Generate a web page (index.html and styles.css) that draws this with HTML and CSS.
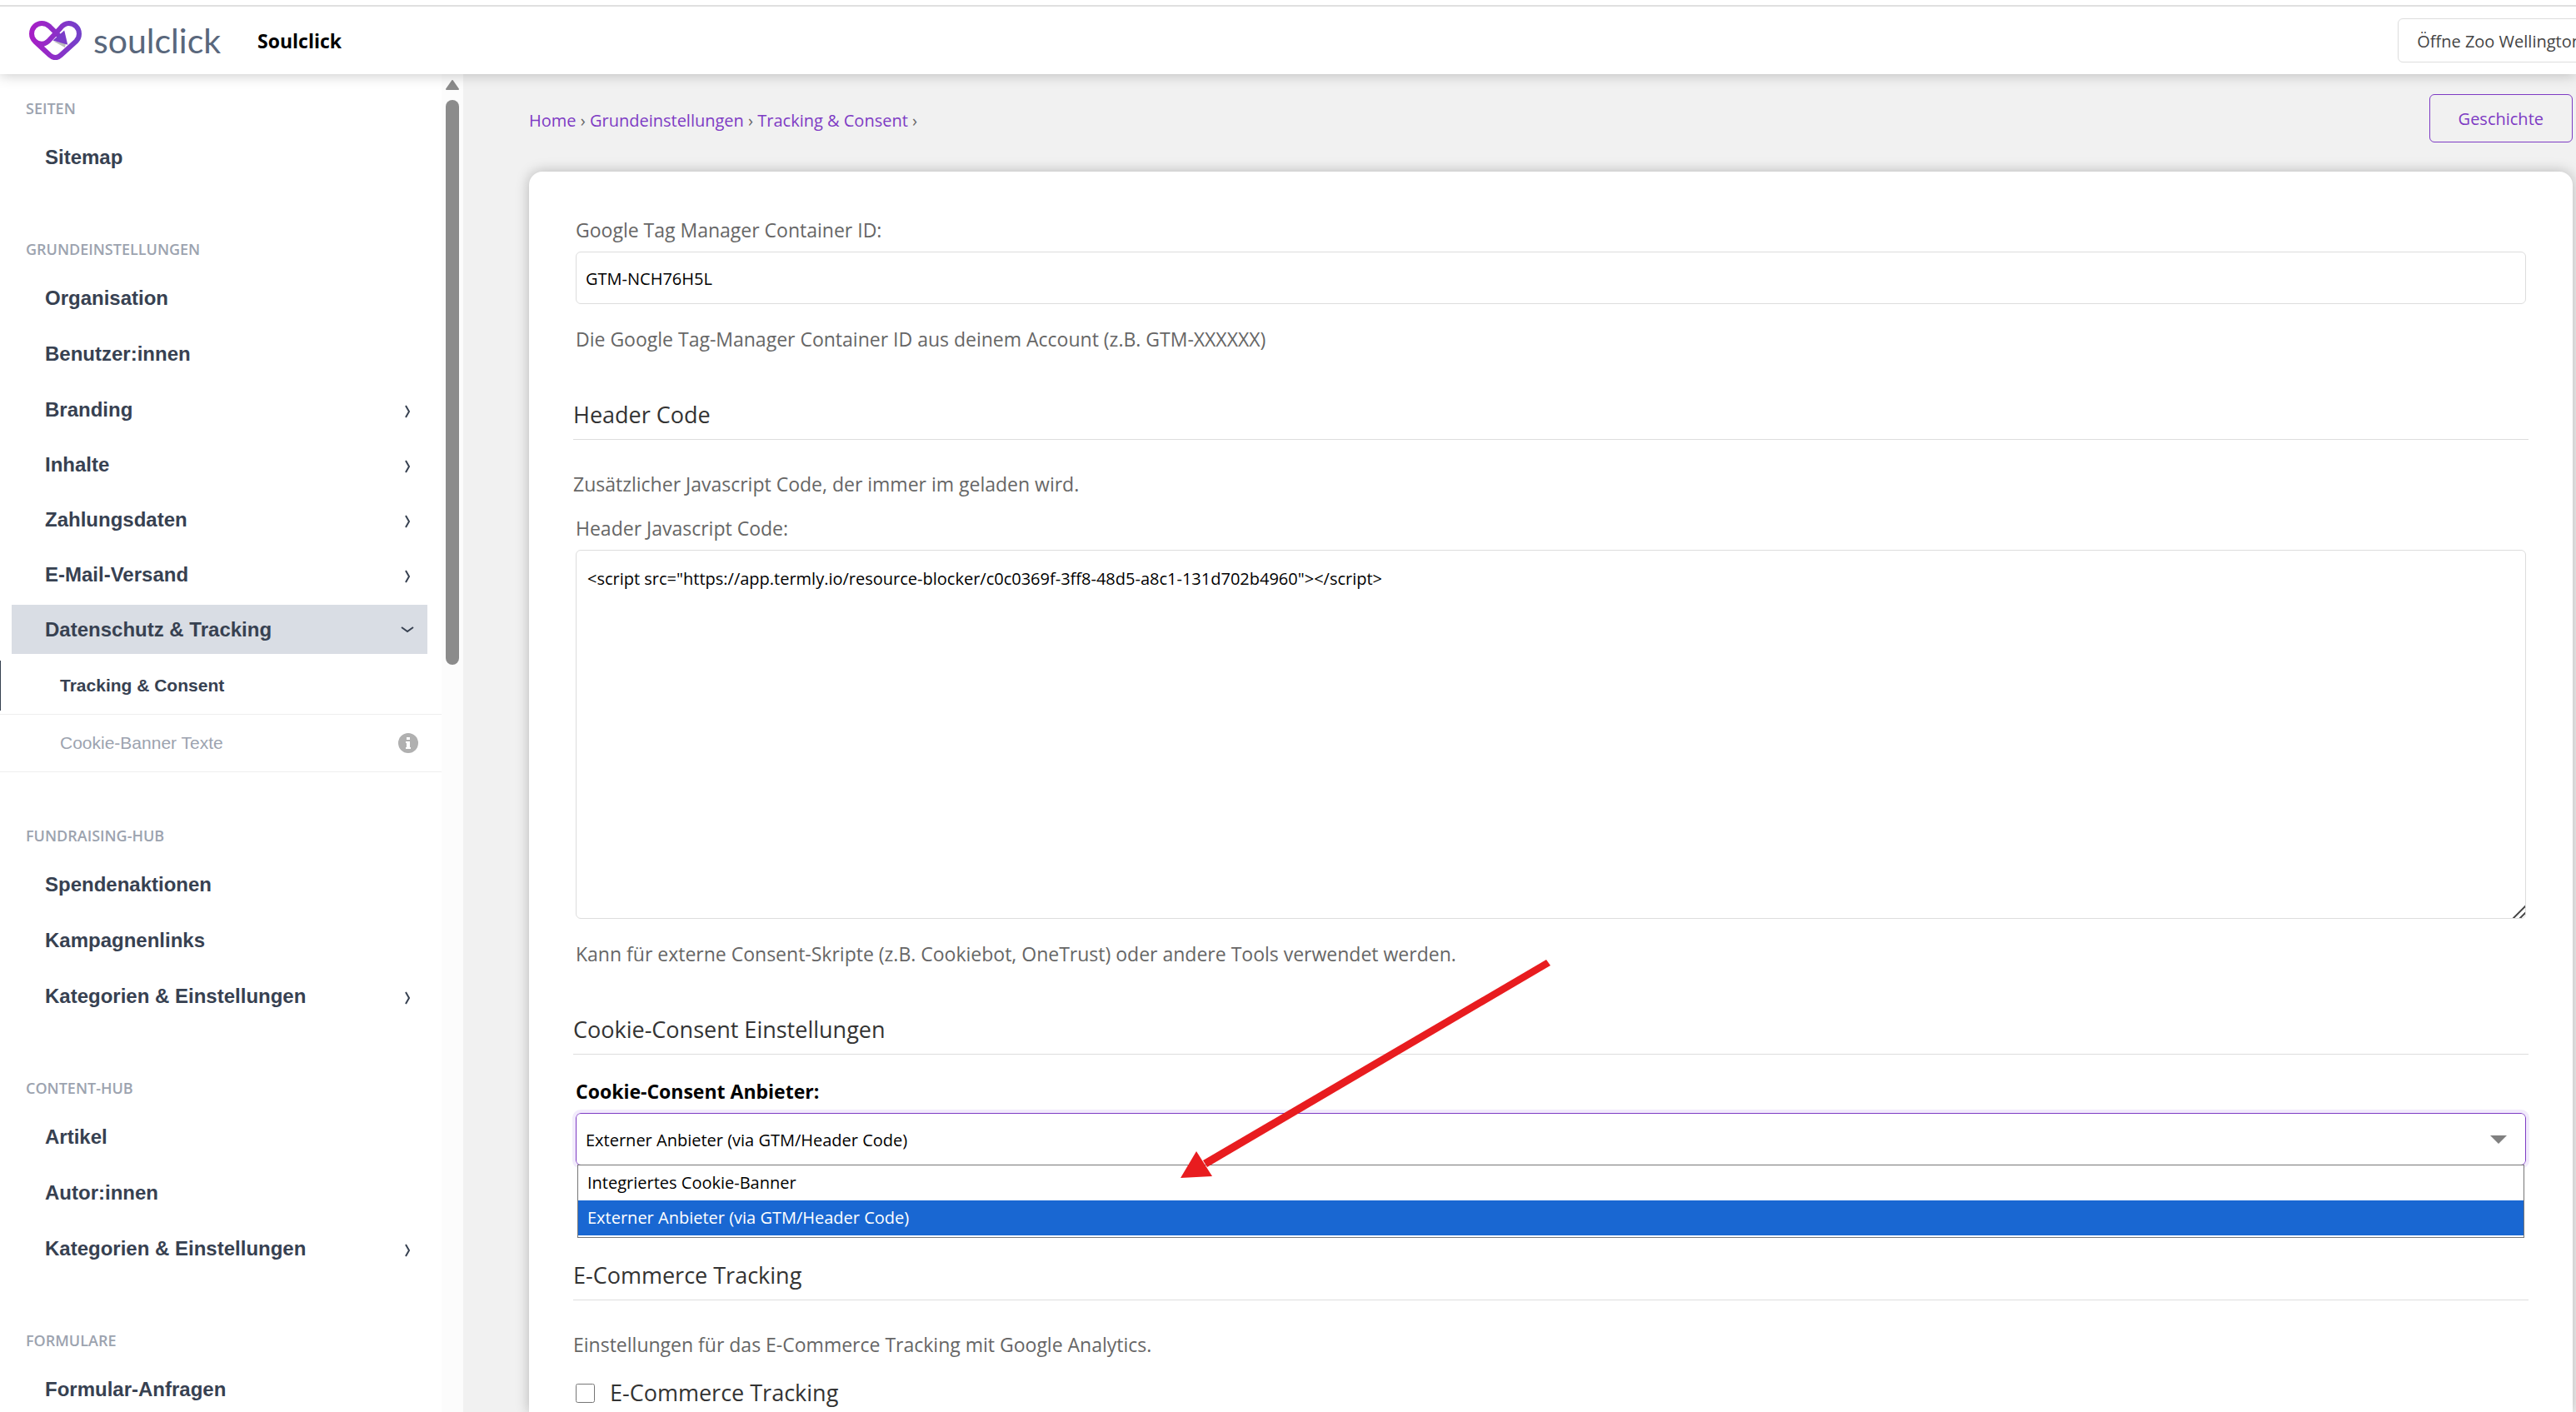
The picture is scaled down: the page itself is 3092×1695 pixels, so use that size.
FILE: index.html
```html
<!DOCTYPE html>
<html lang="de">
<head>
<meta charset="utf-8">
<title>Tracking &amp; Consent | Soulclick</title>
<link rel="stylesheet" href="styles.css">
</head>
<body>
<header class="header">
    <a class="logo" href="#">
        <svg class="logo-icon" viewBox="0 0 188 140" aria-hidden="true">
            <defs>
                <linearGradient id="heart" x1="0" y1="0" x2="1" y2="0">
                    <stop offset="0" stop-color="#a61fc6"/>
                    <stop offset="1" stop-color="#7440c9"/>
                </linearGradient>
            </defs>
            <path d="M86 72L128 95L132 80Z" fill="#bbb"/>
            <path d="M108 55L74 21Q61 9 45 9A36 37 0 0 0 9 46A37 37 0 0 0 45 83Q57 83 68 73L112 26Q125 9 142 9A37 37 0 0 1 179 46Q179 62 168 73L113 123Q94 140 74 123L20 73" fill="none" stroke="url(#heart)" stroke-width="18"/>
            <path d="M138 86L126 34L85 70Z" fill="#7a3cc8"/>
        </svg>
        <span class="logo-text">soulclick</span>
    </a>
    <strong class="site-name">Soulclick</strong>
    <button class="btn btn-open" type="button">Öffne Zoo Wellington</button>
</header>

<div class="page">
    <aside class="sidebar">
        <nav class="nav">
            <section class="nav-group">
                <h2 class="nav-title">SEITEN</h2>
                <a class="nav-item" href="#">Sitemap</a>
            </section>
            <section class="nav-group">
                <h2 class="nav-title">GRUNDEINSTELLUNGEN</h2>
                <a class="nav-item" href="#">Organisation</a>
                <a class="nav-item" href="#">Benutzer:innen</a>
                <a class="nav-item parent" href="#">Branding<svg class="chevron" viewBox="0 0 16 16"><path d="M6 3L10 10L6 17"/></svg></a>
                <a class="nav-item parent" href="#">Inhalte<svg class="chevron" viewBox="0 0 16 16"><path d="M6 3L10 10L6 17"/></svg></a>
                <a class="nav-item parent" href="#">Zahlungsdaten<svg class="chevron" viewBox="0 0 16 16"><path d="M6 3L10 10L6 17"/></svg></a>
                <a class="nav-item parent" href="#">E-Mail-Versand<svg class="chevron" viewBox="0 0 16 16"><path d="M6 3L10 10L6 17"/></svg></a>
                <a class="nav-item parent open" href="#">Datenschutz &amp; Tracking<svg class="chevron" viewBox="0 0 16 16"><path d="M1 5L8 10L15 5"/></svg></a>
                <div class="subnav">
                    <div class="subnav-row"><a class="subnav-item current" href="#">Tracking &amp; Consent</a></div>
                    <div class="subnav-row">
                        <a class="subnav-item" href="#">Cookie-Banner Texte
                            <svg class="info" viewBox="0 0 24 24"><circle cx="12" cy="12" r="12" fill="#b0b0b0"/><path d="M10 5h4v3h-4zM9 10h5v7h1v2H9v-2h1v-5H9z" fill="#fff"/></svg>
                        </a>
                    </div>
                </div>
            </section>
            <section class="nav-group">
                <h2 class="nav-title">FUNDRAISING-HUB</h2>
                <a class="nav-item" href="#">Spendenaktionen</a>
                <a class="nav-item" href="#">Kampagnenlinks</a>
                <a class="nav-item" href="#">Kategorien &amp; Einstellungen<svg class="chevron" viewBox="0 0 16 16"><path d="M6 3L10 10L6 17"/></svg></a>
            </section>
            <section class="nav-group">
                <h2 class="nav-title">CONTENT-HUB</h2>
                <a class="nav-item" href="#">Artikel</a>
                <a class="nav-item" href="#">Autor:innen</a>
                <a class="nav-item" href="#">Kategorien &amp; Einstellungen<svg class="chevron" viewBox="0 0 16 16"><path d="M6 3L10 10L6 17"/></svg></a>
            </section>
            <section class="nav-group">
                <h2 class="nav-title">FORMULARE</h2>
                <a class="nav-item" href="#">Formular-Anfragen</a>
            </section>
        </nav>
        <div class="scrollbar">
            <svg class="scroll-up" viewBox="0 0 16 12"><path d="M8 1L15 11H1Z"/></svg>
            <div class="scroll-thumb"></div>
        </div>
    </aside>

    <main class="main">
        <div class="topline">
            <nav class="breadcrumb">
                <a href="#">Home</a> › <a href="#">Grundeinstellungen</a> › <a href="#">Tracking &amp; Consent</a> ›
            </nav>
            <button class="btn btn-history" type="button">Geschichte</button>
        </div>

        <form class="card">
            <div class="field">
                <label class="label" for="gtm">Google Tag Manager Container ID:</label>
                <input class="control" id="gtm" type="text" value="GTM-NCH76H5L">
                <p class="help">Die Google Tag-Manager Container ID aus deinem Account (z.B. GTM-XXXXXX)</p>
            </div>

            <h2 class="heading">Header Code</h2>
            <p class="intro">Zusätzlicher Javascript Code, der immer im geladen wird.</p>
            <div class="field">
                <label class="label" for="header-js">Header Javascript Code:</label>
                <textarea class="control code" id="header-js" spellcheck="false">&lt;script src="https://app.termly.io/resource-blocker/c0c0369f-3ff8-48d5-a8c1-131d702b4960"&gt;&lt;/script&gt;</textarea>
                <p class="help">Kann für externe Consent-Skripte (z.B. Cookiebot, OneTrust) oder andere Tools verwendet werden.</p>
            </div>

            <h2 class="heading">Cookie-Consent Einstellungen</h2>
            <div class="field field-provider">
                <label class="label required" for="provider">Cookie-Consent Anbieter:</label>
                <div class="select">
                    <select class="control focused" id="provider">
                        <option>Integriertes Cookie-Banner</option>
                        <option selected>Externer Anbieter (via GTM/Header Code)</option>
                    </select>
                    <svg class="caret" viewBox="0 0 20 10"><path d="M0 0H20L10 10Z"/></svg>
                    <ul class="options">
                        <li>Integriertes Cookie-Banner</li>
                        <li class="selected">Externer Anbieter (via GTM/Header Code)</li>
                    </ul>
                    <svg class="arrow" viewBox="0 0 450 264"><path d="M441 -1L446 6L34 248L29 240Z"/><path d="M2 261L21 229L40 259Z"/></svg>
                </div>
            </div>

            <h2 class="heading">E-Commerce Tracking</h2>
            <p class="intro">Einstellungen für das E-Commerce Tracking mit Google Analytics.</p>
            <div class="field check">
                <input class="checkbox" id="ecommerce" type="checkbox">
                <label for="ecommerce">E-Commerce Tracking</label>
            </div>
        </form>
    </main>
</div>
</body>
</html>
```
FILE: styles.css
```css
*{box-sizing:border-box;}
body{margin:0; height:100vh; overflow:hidden; display:flex; flex-direction:column; background:#f1f1f1; color:#666; font:23px/36px "Open Sans", "Noto Sans", sans-serif;}
h2,p,ul{margin:0; padding:0; font-weight:normal;}
a{text-decoration:none;}
button,input,select,textarea{font-family:inherit;}

/* header */
.header{flex:none; display:flex; align-items:center; height:89px; padding:8px 0 0 35px; background:linear-gradient(#fff 6px, #e0e0e0 6px, #e0e0e0 8px, #fff 8px); box-shadow:0 0 16px rgba(0,0,0,.25); z-index:2;}
.logo{display:flex; align-items:center; gap:14px;}
.logo-icon{width:63px; height:47px;}
.logo-text{font:41px/42px Lato, sans-serif; color:#59677c;}
.site-name{margin-left:44px; color:#000; font-size:23px;}
.btn{background:none; border-radius:6px; font-size:20px; line-height:28px; white-space:nowrap;}
.btn-open{flex:none; margin-left:auto; margin-right:-30px; height:53px; padding:2px 22px 0; border:1px solid #ddd; color:#444;}

.page{flex:1; min-height:0; display:flex;}

/* sidebar */
.sidebar{flex:none; display:flex; width:556px; background:#fff; overflow:hidden;}
.nav{flex:1; padding-top:29px;}
.nav-group{padding-bottom:61px;}
.nav-title{margin:0 0 17px 31px; color:#9ca3af; font-size:18px; line-height:24px; font-weight:600;}
.nav-item{display:flex; align-items:center; justify-content:space-between; height:59px; margin:0 17px 8px 14px; padding:0 16px 0 40px; color:#374151; font:bold 24px/32px "Liberation Sans", Arial, sans-serif;}
.nav-item.parent{margin-bottom:7px;}
.nav-item.open{margin-bottom:4px; background:#d9dde4;}
.chevron{width:16px; height:16px; overflow:visible; fill:none; stroke:#374151; stroke-width:2;}
.subnav{margin-bottom:3px;}
.subnav-row{padding:4px 0; border-bottom:1px solid #eee;}
.subnav-item{display:flex; align-items:center; justify-content:space-between; height:60px; padding:0 28px 0 71px; border-left:1px solid transparent; color:#9ca3af; font:21px/28px "Liberation Sans", Arial, sans-serif;}
.subnav-item.current{border-color:#374151; color:#374151; font-weight:bold;}
.info{width:24px; height:24px;}
.scrollbar{display:flex; flex-direction:column; align-items:center; gap:12px; width:26px; padding-top:7px; background:#fcfcfc;}
.scroll-up{width:16px; height:12px; fill:#8b8b8b; stroke:#8b8b8b; stroke-width:2; stroke-linejoin:round;}
.scroll-thumb{width:16px; height:678px; border-radius:8px; background:#8b8b8b;}

/* content */
.main{flex:1; min-width:0; display:flex; flex-direction:column; padding:24px 4px 0 79px;}
.topline{display:flex; align-items:flex-end; justify-content:space-between; margin-bottom:35px;}
.breadcrumb{padding-bottom:12px; font-size:20px; line-height:28px;}
.breadcrumb a{color:#7e3bc4;}
.btn-history{height:58px; padding:2px 34px 0; border:1px solid #7e3bc4; color:#7e3bc4;}
.card{flex:1; padding:52px 53px 0; border-radius:16px 16px 0 0; background:#fff; box-shadow:0 0 16px rgba(0,0,0,.25);}
.field{padding:0 3px;}
.label{display:block; margin-bottom:8px;}
.label.required{color:#000; font-weight:bold;}
.control{display:block; width:100%; height:63px; padding:2px 11px 0; border:1px solid #ddd; border-radius:6px; background:#fff; color:#000; font-size:20px; line-height:28px;}
.code{height:443px; padding:20px 13px;}
.code::-webkit-resizer{background:linear-gradient(135deg, transparent 48%, #555 48%, #555 58%, transparent 58%, transparent 74%, #555 74%, #555 84%, transparent 84%);}
.control.focused{appearance:none; border-color:#7e3bc4; outline:4px solid #f2ebfc;}
.help{margin-top:24px;}
.heading{margin-top:55px; padding-bottom:11px; border-bottom:1px solid #ddd; color:#333; font-size:27px; line-height:36px;}
.intro{margin:35px 0 17px;}
.field-provider{margin:26px 0 114px;}

/* opened select */
.select{position:relative;}
.caret{position:absolute; right:23px; top:27px; width:20px; height:10px; fill:#808080;}
.options{position:absolute; left:2px; right:2px; top:62px; padding-bottom:2px; border:1px solid #767676; background:#fff; list-style:none; color:#000; font-size:20px; line-height:42px;}
.options li{padding:0 11px;}
.options .selected{background:#1967d2; color:#fff;}
.arrow{position:absolute; left:724px; top:-183px; width:450px; height:264px; overflow:visible; fill:#e81c1f;}

.check{display:flex; align-items:center; gap:18px; margin-top:22px; color:#333; font-size:27px;}
.checkbox{width:23px; height:23px; margin:0;}
```
